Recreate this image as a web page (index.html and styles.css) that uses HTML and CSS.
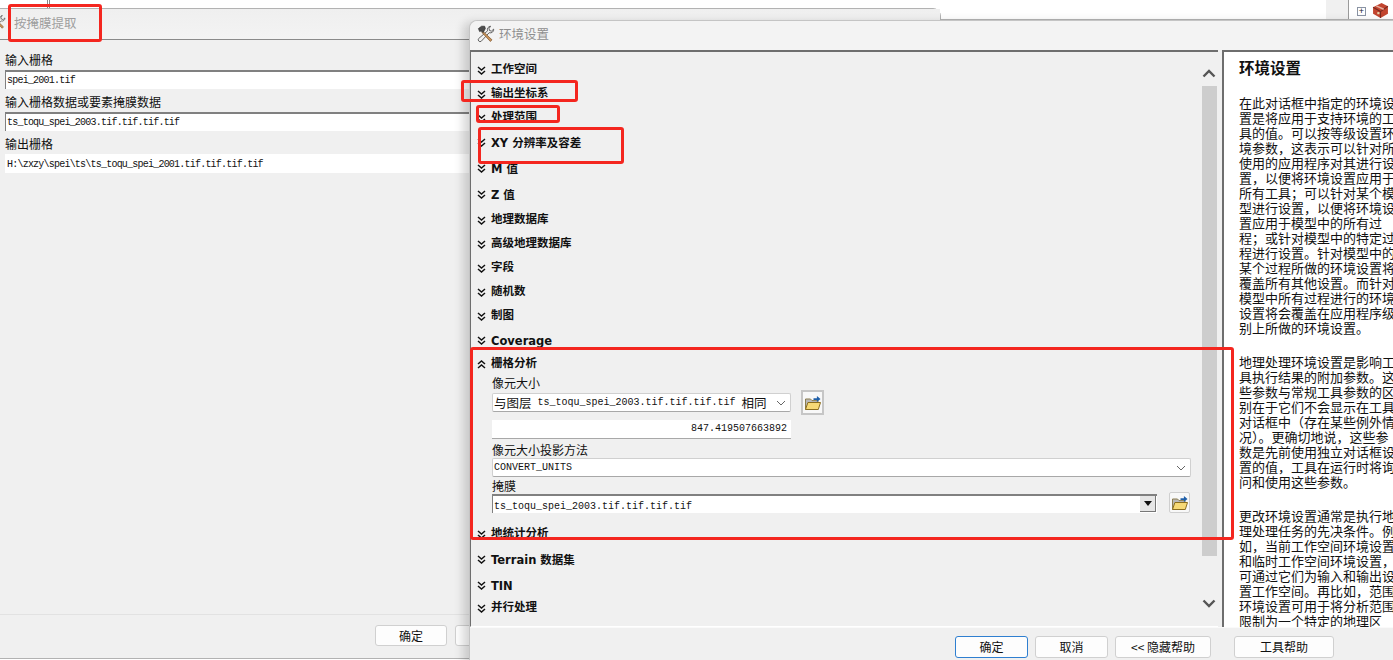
FILE: index.html
```html
<!DOCTYPE html>
<html lang="zh">
<head>
<meta charset="utf-8">
<title>环境设置</title>
<link rel="stylesheet" href="styles.css">
</head>
<body>
<svg class="defs" width="0" height="0" aria-hidden="true">
  <symbol id="down" viewBox="0 0 9 9"><path d="M1 1l3.5 3L8 1M1 5l3.5 3L8 5" fill="none" stroke="#111" stroke-width="1.5"/></symbol>
  <symbol id="up" viewBox="0 0 9 9"><path d="M1 4l3.5-3L8 4M1 8l3.5-3L8 8" fill="none" stroke="#111" stroke-width="1.5"/></symbol>
  <symbol id="tools" viewBox="0 0 18 18">
    <path d="M13.6 1.2a3.4 3.4 0 0 0-3 4.6L1.6 13.6a1.9 1.9 0 0 0 2.6 2.7l8-8.6a3.4 3.4 0 0 0 4.5-3.6l-2.2 2-2-.6-.5-2z" fill="#f2f2f2" stroke="#555" stroke-width=".9"/>
    <path d="M6 6.4l9 8.4-1.6 1.7L5 7.6z" fill="#c9935a" stroke="#7a5630" stroke-width=".7"/>
    <path d="M1.4 3.6L4.6 1.2h3l.8 2.2L6.2 7.6 4 6 2.6 6.6z" fill="#4d4d4d" stroke="#222" stroke-width=".6"/>
  </symbol>
  <symbol id="folder" viewBox="0 0 18 18">
    <path d="M1.5 15.5V5h5l1.5 1.6h6v2" fill="#b9b9b9" stroke="#8b7d4e"/>
    <path d="M1.5 15.5l2.4-7h12.6l-2.2 7z" fill="#f6d976" stroke="#8b6d1e"/>
    <path d="M9.5 4.2h3.4V2l3.6 3-3.6 3V5.9H9.5z" fill="#1f5fa8"/>
  </symbol>
</svg>

<div class="top-strip">
  <span class="tick"></span>
  <span class="top-column"></span>
  <span class="tree-box">+</span>
  <svg class="toolbox" viewBox="0 0 16 16" aria-hidden="true">
    <path d="M1 5l8-4 6 3v7l-7 4-7-4z" fill="#c2452f"/>
    <path d="M1 5l7 4 7-5M8 9v6" fill="none" stroke="#7a2a20"/>
    <path d="M4 3.6l7 3.2" stroke="#e8b0a0" stroke-width="1.4"/>
    <rect x="5" y="9.5" width="2" height="2" fill="#e8d8b0"/>
  </svg>
</div>

<section class="window back-window">
  <header class="back-title">
    <svg class="back-icon"><use href="#tools"/></svg>
    <span>按掩膜提取</span>
  </header>
  <div class="back-body">
    <label class="field-label">输入栅格</label>
    <div class="mono-input sunken">spei_2001.tif</div>
    <label class="field-label">输入栅格数据或要素掩膜数据</label>
    <div class="mono-input sunken">ts_toqu_spei_2003.tif.tif.tif.tif</div>
    <label class="field-label">输出栅格</label>
    <div class="mono-input">H:\zxzy\spei\ts\ts_toqu_spei_2001.tif.tif.tif.tif</div>
  </div>
  <footer class="back-footer">
    <button class="btn back-btn">确定</button>
    <button class="btn back-btn">取消</button>
  </footer>
</section>

<section class="window front-window">
  <header class="front-title">
    <svg class="front-icon"><use href="#tools"/></svg>
    <span>环境设置</span>
  </header>
  <div class="front-main">
    <div class="settings">
      <div class="settings-list">
        <div class="row"><svg class="chev"><use href="#down"/></svg>工作空间</div>
        <div class="row"><svg class="chev"><use href="#down"/></svg>输出坐标系</div>
        <div class="row"><svg class="chev"><use href="#down"/></svg>处理范围</div>
        <div class="row latin"><svg class="chev"><use href="#down"/></svg>XY 分辨率及容差</div>
        <div class="row latin"><svg class="chev"><use href="#down"/></svg>M 值</div>
        <div class="row latin"><svg class="chev"><use href="#down"/></svg>Z 值</div>
        <div class="row"><svg class="chev"><use href="#down"/></svg>地理数据库</div>
        <div class="row"><svg class="chev"><use href="#down"/></svg>高级地理数据库</div>
        <div class="row"><svg class="chev"><use href="#down"/></svg>字段</div>
        <div class="row"><svg class="chev"><use href="#down"/></svg>随机数</div>
        <div class="row"><svg class="chev"><use href="#down"/></svg>制图</div>
        <div class="row latin"><svg class="chev"><use href="#down"/></svg>Coverage</div>
        <div class="row tight"><svg class="chev"><use href="#up"/></svg>栅格分析</div>
        <div class="raster">
          <div class="raster-label">像元大小</div>
          <div class="cell-line">
            <div class="select cell-select"><span class="sel-cjk">与图层</span><span class="sel-mono">ts_toqu_spei_2003.tif.tif.tif.tif</span><span class="sel-cjk">相同</span><svg class="sel-arrow" viewBox="0 0 10 6"><path d="M1 1l4 4 4-4" fill="none" stroke="#666"/></svg></div>
            <button class="icon-btn folder-btn-a"><svg><use href="#folder"/></svg></button>
          </div>
          <div class="number-input">847.419507663892</div>
          <div class="raster-label label-tight">像元大小投影方法</div>
          <div class="select wide-select"><span class="sel-mono">CONVERT_UNITS</span><svg class="sel-arrow" viewBox="0 0 10 6"><path d="M1 1l4 4 4-4" fill="none" stroke="#666"/></svg></div>
          <div class="raster-label label-mask">掩膜</div>
          <div class="mask-line">
            <div class="mask-combo"><span class="sel-mono">ts_toqu_spei_2003.tif.tif.tif.tif</span><span class="combo-btn"></span></div>
            <button class="icon-btn folder-btn-b"><svg><use href="#folder"/></svg></button>
          </div>
        </div>
        <div class="row after-raster"><svg class="chev"><use href="#down"/></svg>地统计分析</div>
        <div class="row latin"><svg class="chev"><use href="#down"/></svg>Terrain 数据集</div>
        <div class="row latin"><svg class="chev"><use href="#down"/></svg>TIN</div>
        <div class="row tight last-row"><svg class="chev"><use href="#down"/></svg>并行处理</div>
      </div>
      <div class="scrollbar">
        <svg class="scroll-arrow" viewBox="0 0 14 9"><path d="M1.5 7.5L7 2l5.5 5.5" fill="none" stroke="#555" stroke-width="2.4"/></svg>
        <div class="scroll-thumb"></div>
        <svg class="scroll-arrow arrow-bottom" viewBox="0 0 14 9"><path d="M1.5 1.5L7 7l5.5-5.5" fill="none" stroke="#555" stroke-width="2.4"/></svg>
      </div>
    </div>
    <aside class="help">
      <h1 class="help-title">环境设置</h1>
      <p class="help-para">在此对话框中指定的环境设置<br>置是将应用于支持环境的工具<br>具的值。可以按等级设置环境<br>境参数，这表示可以针对所有<br>使用的应用程序对其进行设置<br>置，以便将环境设置应用于<br>所有工具；可以针对某个模型<br>型进行设置，以便将环境设置<br>置应用于模型中的所有过<br>程；或针对模型中的特定过<br>程进行设置。针对模型中的<br>某个过程所做的环境设置将<br>覆盖所有其他设置。而针对<br>模型中所有过程进行的环境<br>设置将会覆盖在应用程序级<br>别上所做的环境设置。</p>
      <p class="help-para">地理处理环境设置是影响工<br>具执行结果的附加参数。这<br>些参数与常规工具参数的区<br>别在于它们不会显示在工具<br>对话框中（存在某些例外情<br>况）。更确切地说，这些参<br>数是先前使用独立对话框设<br>置的值，工具在运行时将询<br>问和使用这些参数。</p>
      <p class="help-para">更改环境设置通常是执行地<br>理处理任务的先决条件。例<br>如，当前工作空间环境设置<br>和临时工作空间环境设置，<br>可通过它们为输入和输出设<br>置工作空间。再比如，范围<br>环境设置可用于将分析范围<br>限制为一个特定的地理区</p>
    </aside>
  </div>
  <footer class="front-footer">
    <button class="btn primary">确定</button>
    <button class="btn cancel">取消</button>
    <button class="btn hide-help">&lt;&lt; 隐藏帮助</button>
    <button class="btn tool-help">工具帮助</button>
  </footer>
</section>

<div class="mark mark-title"></div>
<div class="mark mark-coord"></div>
<div class="mark mark-extent"></div>
<div class="mark mark-xy"></div>
<div class="mark mark-raster"></div>
</body>
</html>
```

FILE: styles.css
```css
* { box-sizing: border-box; }
html, body { margin: 0; height: 100%; }
body {
  width: 1393px;
  height: 660px;
  overflow: hidden;
  position: relative;
  background: #fff;
  font-family: "Noto Sans CJK SC", sans-serif;
  color: #111;
}
.defs { position: absolute; }

.top-strip { position: absolute; inset: 0 0 auto 0; height: 20px; border-bottom: 1px solid #b4b4b4; }
.tick { position: absolute; left: 47px; top: 0; width: 3px; height: 9px; border-left: 1px solid #888; border-right: 1px solid #888; }
.top-column { position: absolute; left: 1326px; top: 0; width: 23px; height: 19px; background: #f0f0f0; border-right: 1px solid #9a9a9a; }
.tree-box { position: absolute; left: 1357px; top: 7px; width: 9px; height: 9px; border: 1px solid #8a93a3; font: 9px/7px "Liberation Sans", sans-serif; text-align: center; color: #223; }
.toolbox { position: absolute; left: 1372px; top: 2px; width: 17px; height: 17px; }

.window { position: absolute; }

/* back window */
.back-window {
  left: -2px; top: 8px; width: 943px; height: 651px;
  background: #f0f0f0;
  border: 1px solid #b2b2b2;
  border-radius: 0 8px 0 0;
  display: flex; flex-direction: column;
}
.back-title { height: 31px; display: flex; align-items: center; gap: 8px; padding-bottom: 4px; background: linear-gradient(#efefef, #f3f3f3); border-bottom: 1px solid #8a8a8a; color: #9e9e9e; font-size: 12.5px; flex: none; }
.back-icon { width: 15px; height: 18px; margin-left: -8px; }
.back-body { flex: 1; padding: 12px 0 0 6px; }
.field-label { display: block; height: 18px; font-size: 12px; line-height: 16px; }
.mono-input {
  width: 465px; height: 19px; margin-bottom: 5px; padding: 2px 0 0 2px;
  background: #fff;
  font: 10px/17px "Liberation Mono", monospace;
  letter-spacing: -.78px;
  white-space: nowrap;
}
.sunken { border-top: 2px solid #808080; border-left: 1px solid #808080; padding-left: 1px; padding-top: 0; }
.back-footer { height: 44px; flex: none; border-top: 1px solid #e2e2e2; padding: 10px 0 0 376px; display: flex; gap: 8px; align-items: flex-start; }
.back-btn { width: 72px; height: 21px; }

.btn {
  background: #fdfdfd; border: 1px solid #d0d0d0; border-radius: 3px;
  font-family: "Noto Sans CJK SC", sans-serif; font-size: 12px; line-height: 1; color: #111; padding: 0;
}

/* front window */
.front-window {
  left: 469px; top: 20px; width: 930px; height: 645px;
  background: #f0f0f0;
  border-radius: 8px 0 0 0;
  border: 1px solid #c4c4c4;
  border-bottom: 0;
  box-shadow: -6px 2px 10px rgba(0,0,0,.16);
  display: flex; flex-direction: column;
}
.front-title { height: 29px; flex: none; display: flex; align-items: center; gap: 4px; padding: 0 0 4px 7px; color: #8e8e8e; font-size: 12.5px; background: #f3f3f3; border-radius: 8px 0 0 0; }
.front-icon { width: 18px; height: 18px; }
.front-main { height: 577px; flex: none; display: flex; }
.settings { width: 748px; flex: none; display: flex; border-top: 2px solid #6e6e6e; border-left: 1px solid #6e6e6e; border-bottom: 1px solid #fff; background: #f0f0f0; }
.settings-list { width: 730px; flex: none; padding-top: 6px; padding-left: 6px; }
.row {
  height: 24px; display: flex; align-items: center; gap: 5px;
  font: 700 11.5px/1 "DejaVu Sans", "Noto Sans CJK SC", sans-serif;
  white-space: nowrap;
}
.latin { height: 26px; padding-top: 2px; }
.latin .chev { margin-top: -4px; }
.tight { margin-top: -2px; }
.last-row { margin-top: -3px; }
.chev { width: 9px; height: 9px; flex: none; }

.raster { padding-left: 15px; margin-top: -2px; }
.raster-label { font-size: 12px; line-height: 17px; height: 17px; }
.label-tight { margin-top: 3px; height: 16px; line-height: 16px; }
.label-mask { margin-top: 1px; height: 16px; line-height: 16px; }
.cell-line { display: flex; align-items: flex-start; height: 29px; }
.select {
  display: flex; align-items: center; gap: 6px; background: #fff;
  border: 1px solid #d0d0d0; border-bottom-color: #a8a8a8; border-radius: 2px; padding-left: 1px;
}
.cell-select { width: 299px; height: 19px; margin-top: 2px; }
.wide-select { width: 699px; height: 19px; }
.sel-cjk { font-size: 12.5px; }
.sel-mono { font: 10px/15px "Liberation Mono", monospace; white-space: nowrap; }
.sel-arrow { width: 10px; height: 6px; margin-left: auto; margin-right: 4px; flex: none; }
.icon-btn { background: #f8f8f8; border: 1px solid #cfcfcf; border-radius: 2px; padding: 0; display: flex; align-items: center; justify-content: center; }
.icon-btn svg { width: 18px; height: 18px; }
.folder-btn-a { width: 23px; height: 25px; margin: -1px 0 0 10px; border: 2px solid #c6c6c6; border-radius: 0; }
.number-input { width: 299px; height: 19px; background: #fff; border-bottom: 1px solid #a8a8a8; text-align: right; padding-right: 4px; font: 10px/18px "Liberation Mono", monospace; }
.mask-line { display: flex; align-items: flex-start; }
.mask-combo { width: 665px; height: 19px; background: #fff; border-top: 2px solid #808080; border-left: 1px solid #808080; padding-left: 1px; position: relative; line-height: 13px; }
.mask-combo .sel-mono { line-height: 13px; }
.combo-btn { position: absolute; right: 1px; top: 0; width: 16px; height: 16px; background: #e6e6e6; border-right: 1px solid #777; border-bottom: 1px solid #777; }
.combo-btn::after { content: ""; position: absolute; left: 4px; top: 5px; border: 4px solid transparent; border-top: 5px solid #111; border-bottom: 0; }
.folder-btn-b { width: 21px; height: 21px; margin: -2px 0 0 12px; }
.after-raster { margin-top: 9px; height: 25px; padding-bottom: 1px; }

.scrollbar { width: 16px; position: relative; flex: none; }
.scroll-arrow { position: absolute; left: 1px; top: 17px; width: 14px; height: 9px; }
.arrow-bottom { top: auto; bottom: 18px; }
.scroll-thumb { position: absolute; left: 1px; top: 34px; width: 15px; height: 470px; background: #cdcdcd; }

.help { flex: 1; margin-left: 4px; background: #fff; border-top: 2px solid #6e6e6e; border-left: 2px solid #6e6e6e; padding: 4px 0 0 15px; overflow: hidden; white-space: nowrap; }
.help-title { margin: 0 0 17px; font-size: 15.5px; line-height: 22px; font-weight: 700; font-family: "Noto Sans CJK SC", sans-serif; }
.help-para { margin: 0 0 19px; font-size: 13px; line-height: 15px; }

.front-footer { height: 33px; flex: none; position: relative; display: flex; align-items: flex-start; padding: 8px 0 0 485px; gap: 7px; border-top: 1px solid #fafafa; }
.front-footer .btn { height: 22px; }
.primary { width: 73px; border-color: #2f7fd0; }
.cancel { width: 73px; }
.hide-help { width: 96px; }
.tool-help { width: 100px; margin-left: 16px; }

/* red annotation frames drawn over the screenshot */
.mark { position: absolute; border: 3px solid #f4261f; border-radius: 3px; }
.mark-title { left: 8px; top: 4px; width: 94px; height: 38px; }
.mark-coord { left: 461px; top: 80px; width: 117px; height: 22px; }
.mark-extent { left: 476px; top: 105px; width: 84px; height: 18px; }
.mark-xy { left: 478px; top: 127px; width: 146px; height: 37px; }
.mark-raster { left: 470px; top: 347px; width: 764px; height: 193px; }
```
